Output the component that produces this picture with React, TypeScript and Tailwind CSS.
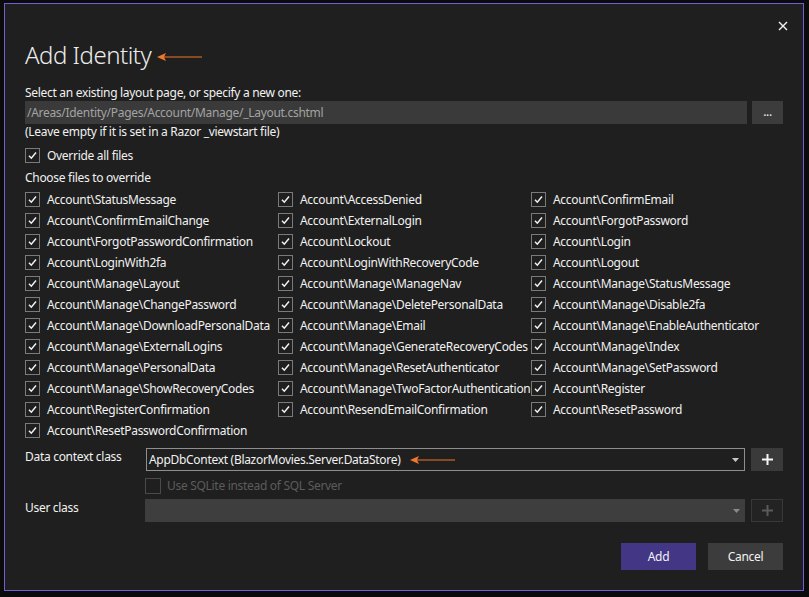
import React from 'react';

const col1 = [
  'Account\\StatusMessage',
  'Account\\ConfirmEmailChange',
  'Account\\ForgotPasswordConfirmation',
  'Account\\LoginWith2fa',
  'Account\\Manage\\Layout',
  'Account\\Manage\\ChangePassword',
  'Account\\Manage\\DownloadPersonalData',
  'Account\\Manage\\ExternalLogins',
  'Account\\Manage\\PersonalData',
  'Account\\Manage\\ShowRecoveryCodes',
  'Account\\RegisterConfirmation',
  'Account\\ResetPasswordConfirmation',
];
const col2 = [
  'Account\\AccessDenied',
  'Account\\ExternalLogin',
  'Account\\Lockout',
  'Account\\LoginWithRecoveryCode',
  'Account\\Manage\\ManageNav',
  'Account\\Manage\\DeletePersonalData',
  'Account\\Manage\\Email',
  'Account\\Manage\\GenerateRecoveryCodes',
  'Account\\Manage\\ResetAuthenticator',
  'Account\\Manage\\TwoFactorAuthentication',
  'Account\\ResendEmailConfirmation',
];
const col3 = [
  'Account\\ConfirmEmail',
  'Account\\ForgotPassword',
  'Account\\Login',
  'Account\\Logout',
  'Account\\Manage\\StatusMessage',
  'Account\\Manage\\Disable2fa',
  'Account\\Manage\\EnableAuthenticator',
  'Account\\Manage\\Index',
  'Account\\Manage\\SetPassword',
  'Account\\Register',
  'Account\\ResetPassword',
];

// interleave into row order for the grid
const files: string[] = [];
for (let i = 0; i < col1.length; i++) {
  files.push(col1[i]);
  if (col2[i]) files.push(col2[i]);
  if (col3[i]) files.push(col3[i]);
}

const Check = ({ disabled = false }: { disabled?: boolean }) => (
  <span
    className={
      disabled
        ? 'w-[16px] h-[16px] border border-[#4a4a4a] shrink-0'
        : 'w-[15px] h-[15px] border border-[#7a7a7a] shrink-0 flex items-center justify-center'
    }
  >
    {!disabled && (
      <svg width="11" height="11" viewBox="0 0 11 11">
        <path d="M2 5.8 L4.3 8.2 L9 2.6" fill="none" stroke="#f2f2f2" strokeWidth="1.5" />
      </svg>
    )}
  </span>
);

const Arrow = () => (
  <svg width="46" height="10" viewBox="0 0 46 10" className="shrink-0">
    <path d="M0 5 L9 1 L7 5 L9 9 Z" fill="#f0782a" />
    <line x1="7" y1="5" x2="45" y2="5" stroke="#f0782a" strokeWidth="1.2" />
  </svg>
);

const Caret = ({ color }: { color: string }) => (
  <svg width="7" height="4" viewBox="0 0 7 4">
    <path d="M0 0 H7 L3.5 4 Z" fill={color} />
  </svg>
);

const Plus = ({ color }: { color: string }) => (
  <svg width="11" height="11" viewBox="0 0 11 11">
    <path d="M5.5 0 V11 M0 5.5 H11" stroke={color} strokeWidth="2" />
  </svg>
);

export default function App() {
  return (
    <div
      className="w-[809px] h-[597px] bg-[#0b0b0b] pt-[3px] pl-[4px] text-[12px] tracking-[-0.3px] text-[#f1f1f1]"
      style={{ fontFamily: '"Noto Sans", "Open Sans", sans-serif' }}
    >
      <div className="relative w-[800px] h-[588px] border border-[#6f60d8] bg-[#1f1f1f] px-[20px]">
        <button className="absolute top-[14px] right-[12px] w-[16px] h-[16px] flex items-center justify-center">
          <svg width="10" height="10" viewBox="0 0 10 10">
            <path d="M1 1 L9 9 M9 1 L1 9" stroke="#f2f2f2" strokeWidth="1.4" />
          </svg>
        </button>

        <div className="mt-[35px] h-[32px] flex items-center gap-[6px]">
          <span className="text-[24px] font-light leading-[32px] tracking-[-0.5px] text-[#ececec]">Add Identity</span>
          <span className="mt-[4px]">
            <Arrow />
          </span>
        </div>

        <div className="mt-[14px] leading-[16px]">Select an existing layout page, or specify a new one:</div>
        <div className="flex gap-[5px] h-[23px]">
          <div className="flex-1 bg-[#3a3a3a] flex items-center px-[2px] text-[#a3a3a3]">
            /Areas/Identity/Pages/Account/Manage/_Layout.cshtml
          </div>
          <button className="w-[31px] bg-[#3c3c3c] text-[#f2f2f2] leading-none pb-[2px]">...</button>
        </div>
        <div className="leading-[16px]">(Leave empty if it is set in a Razor _viewstart file)</div>

        <div className="mt-[5px] h-[21px] flex items-center gap-[7px]">
          <Check />
          <span>Override all files</span>
        </div>
        <div className="mt-[4px] leading-[16px]">Choose files to override</div>

        <div className="mt-[3px] grid grid-cols-[253px_253px_1fr] auto-rows-[21px]">
          {files.map((f) => (
            <div key={f} className="flex items-center gap-[7px] whitespace-nowrap">
              <Check />
              <span>{f}</span>
            </div>
          ))}
        </div>

        <div className="mt-[7px] flex">
          <div className="w-[121px] pt-[1px] leading-[16px]">Data context class</div>
          <div className="flex-1 flex gap-[6px]">
            <div className="flex-1 h-[23px] border border-[#8e8e8e] flex items-center pl-[2px] pr-[5px]">
              <span className="whitespace-nowrap">AppDbContext (BlazorMovies.Server.DataStore)</span>
              <span className="ml-[10px] mt-[1px]">
                <Arrow />
              </span>
              <span className="ml-auto">
                <Caret color="#c8c8c8" />
              </span>
            </div>
            <button className="w-[32px] h-[23px] bg-[#3a3a3a] flex items-center justify-center">
              <Plus color="#f5f5f5" />
            </button>
          </div>
        </div>

        <div className="mt-[7px] ml-[120px] h-[16px] flex items-center gap-[6px] text-[#5c5c5c]">
          <Check disabled />
          <span>Use SQLite instead of SQL Server</span>
        </div>

        <div className="mt-[5px] flex">
          <div className="w-[120px] pt-[1px] leading-[16px]">User class</div>
          <div className="flex-1 flex gap-[6px]">
            <div className="flex-1 h-[23px] bg-[#3e3e3e] flex items-center justify-end pr-[5px]">
              <Caret color="#8a8a8a" />
            </div>
            <button className="w-[32px] h-[23px] border border-[#383838] bg-[#232323] flex items-center justify-center">
              <Plus color="#5a5a5a" />
            </button>
          </div>
        </div>

        <div className="mt-[21px] flex justify-end gap-[12px]">
          <button className="w-[75px] h-[27px] bg-[#433685] text-[#f2f2f2]">Add</button>
          <button className="w-[75px] h-[27px] bg-[#3c3c3c] text-[#f2f2f2]">Cancel</button>
        </div>
      </div>
    </div>
  );
}
